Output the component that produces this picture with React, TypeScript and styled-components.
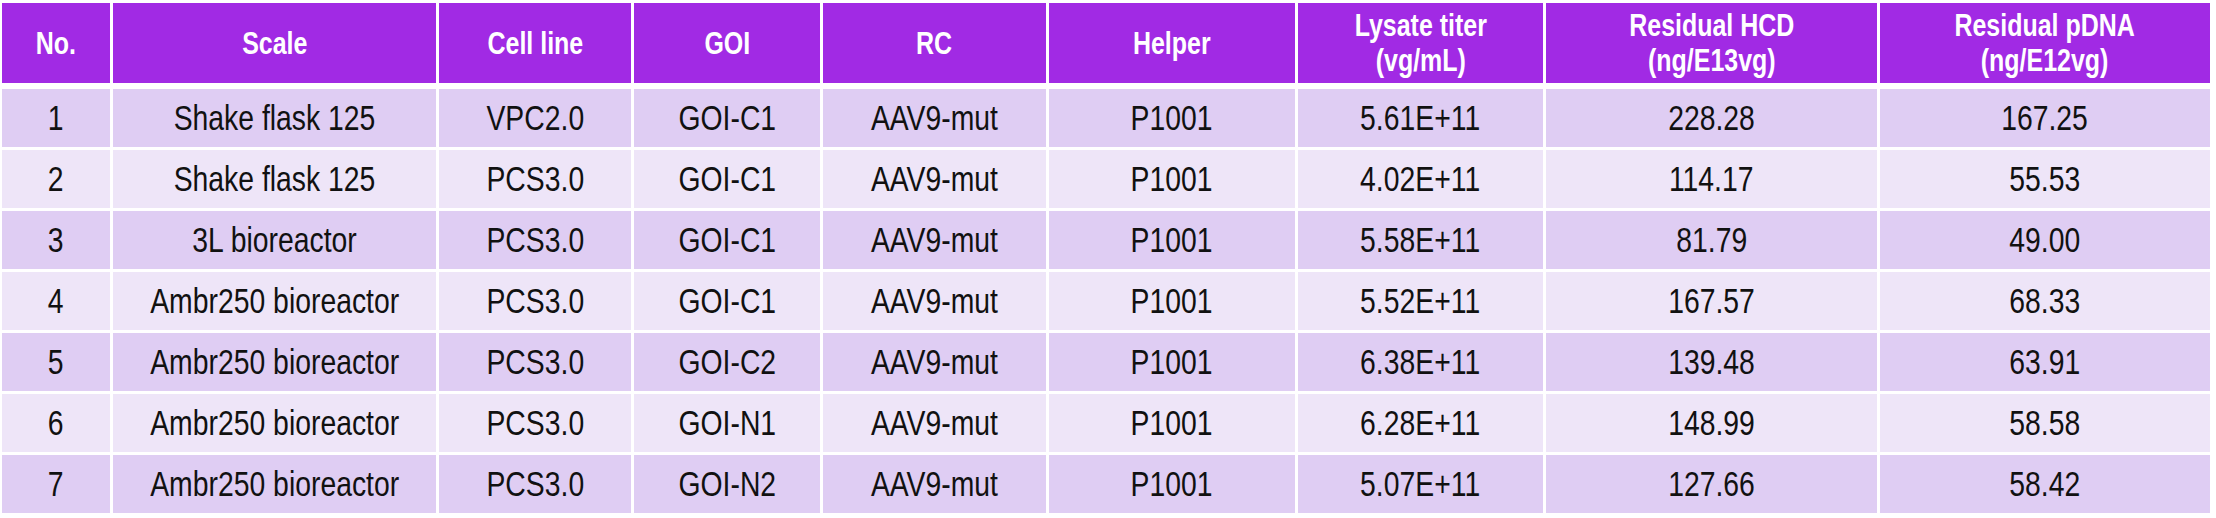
import React from "react";
import styled, { createGlobalStyle } from "styled-components";

const GlobalStyle = createGlobalStyle`
  html, body {
    margin: 0;
    padding: 0;
    background: #ffffff;
  }
  body {
    font-family: "Liberation Sans", Arial, sans-serif;
  }
`;

const columnWidths = [108, 323, 192, 186, 223, 246, 245, 331, 330];

const headers: string[][] = [
  ["No."],
  ["Scale"],
  ["Cell line"],
  ["GOI"],
  ["RC"],
  ["Helper"],
  ["Lysate titer", "(vg/mL)"],
  ["Residual HCD", "(ng/E13vg)"],
  ["Residual pDNA", "(ng/E12vg)"],
];

const rows: string[][] = [
  ["1", "Shake flask 125", "VPC2.0", "GOI-C1", "AAV9-mut", "P1001", "5.61E+11", "228.28", "167.25"],
  ["2", "Shake flask 125", "PCS3.0", "GOI-C1", "AAV9-mut", "P1001", "4.02E+11", "114.17", "55.53"],
  ["3", "3L bioreactor", "PCS3.0", "GOI-C1", "AAV9-mut", "P1001", "5.58E+11", "81.79", "49.00"],
  ["4", "Ambr250 bioreactor", "PCS3.0", "GOI-C1", "AAV9-mut", "P1001", "5.52E+11", "167.57", "68.33"],
  ["5", "Ambr250 bioreactor", "PCS3.0", "GOI-C2", "AAV9-mut", "P1001", "6.38E+11", "139.48", "63.91"],
  ["6", "Ambr250 bioreactor", "PCS3.0", "GOI-N1", "AAV9-mut", "P1001", "6.28E+11", "148.99", "58.58"],
  ["7", "Ambr250 bioreactor", "PCS3.0", "GOI-N2", "AAV9-mut", "P1001", "5.07E+11", "127.66", "58.42"],
];

const Page = styled.div`
  padding: 3px 0 0 2px;
`;

const Table = styled.div`
  display: grid;
  grid-template-columns: ${columnWidths.map((w) => `${w}px`).join(" ")};
  grid-template-rows: 83px repeat(${rows.length}, 58px);
  column-gap: 3px;
  row-gap: 3px;
  background: #ffffff;
`;

const HeaderCell = styled.div`
  align-self: start;
  height: 80px;
  background: #a12ae4;
  color: #ffffff;
  font-weight: 700;
  font-size: 32px;
  line-height: 35px;
  display: flex;
  align-items: center;
  justify-content: center;
  text-align: center;
`;

const Cell = styled.div<{ $shade: "dark" | "light" }>`
  background: ${(p) => (p.$shade === "dark" ? "#dfcdf3" : "#eee5f8")};
  color: #111111;
  font-size: 35px;
  display: flex;
  align-items: center;
  justify-content: center;
`;

const Squeeze = styled.span<{ $x?: number }>`
  display: inline-block;
  white-space: nowrap;
  transform: scaleX(${(p) => p.$x ?? 0.81});
`;

const HeadLines = styled(Squeeze)`
  display: flex;
  flex-direction: column;
  align-items: center;
`;

export default function App() {
  return (
    <>
      <GlobalStyle />
      <Page>
        <Table>
          {headers.map((lines, i) => (
            <HeaderCell key={`h${i}`}>
              <HeadLines $x={0.78}>
                {lines.map((l) => (
                  <span key={l}>{l}</span>
                ))}
              </HeadLines>
            </HeaderCell>
          ))}
          {rows.map((row, r) =>
            row.map((value, c) => (
              <Cell key={`${r}-${c}`} $shade={r % 2 === 0 ? "dark" : "light"}>
                <Squeeze>{value}</Squeeze>
              </Cell>
            ))
          )}
        </Table>
      </Page>
    </>
  );
}
